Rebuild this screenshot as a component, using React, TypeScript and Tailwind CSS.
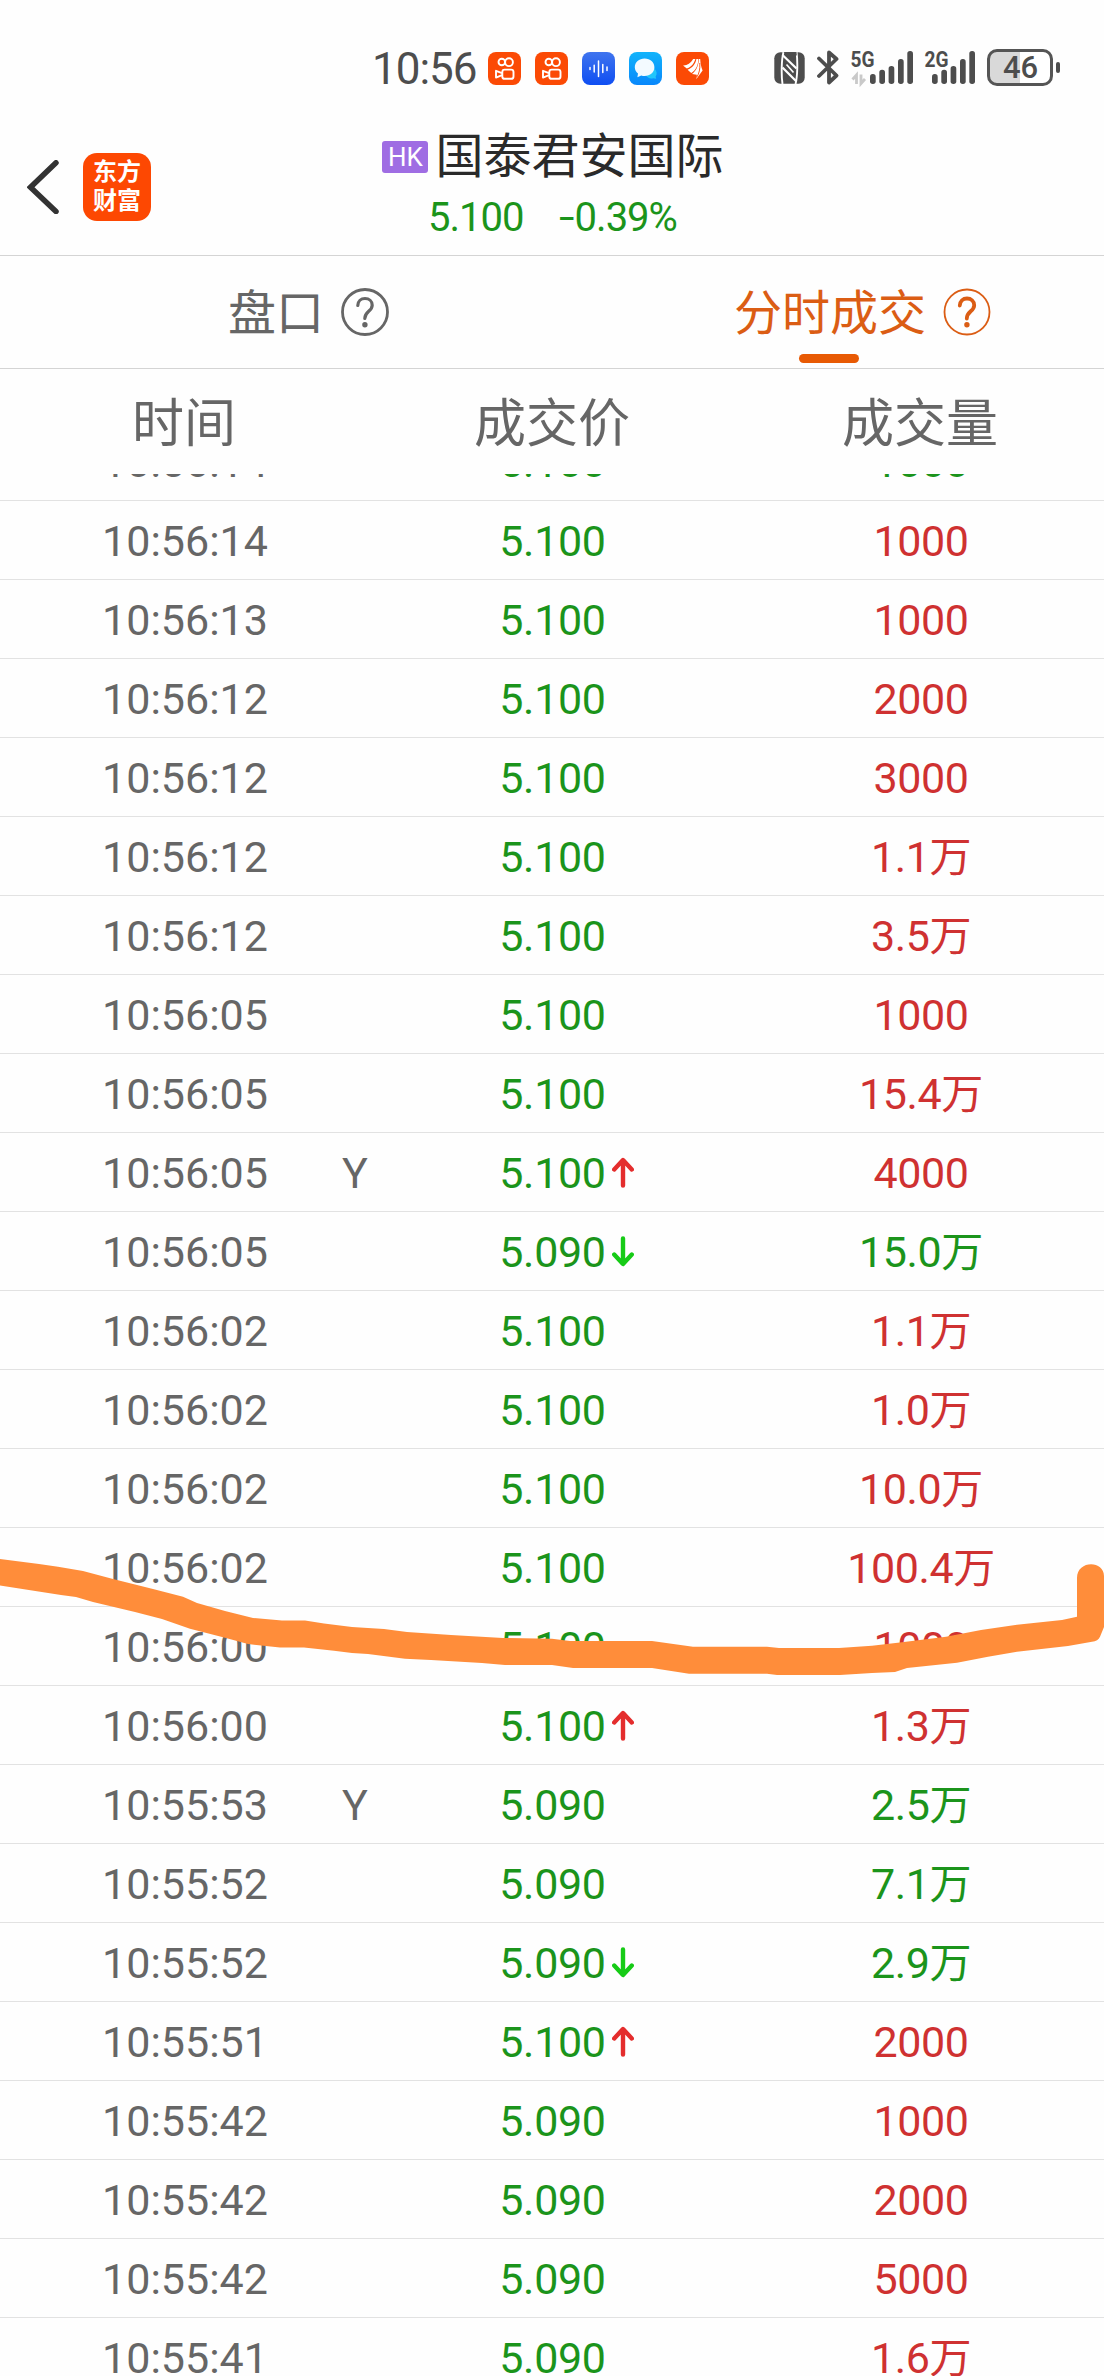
import React from "react";

type Tone = "red" | "green";
type Move = "up" | "down";

interface Trade {
  time: string;
  price: string;
  volume: string;
  tone: Tone;
  flag?: string;
  move?: Move;
}

const trades: Trade[] = [
  { time: "10:56:14", price: "5.100", volume: "1000", tone: "green" },
  { time: "10:56:14", price: "5.100", volume: "1000", tone: "red" },
  { time: "10:56:13", price: "5.100", volume: "1000", tone: "red" },
  { time: "10:56:12", price: "5.100", volume: "2000", tone: "red" },
  { time: "10:56:12", price: "5.100", volume: "3000", tone: "red" },
  { time: "10:56:12", price: "5.100", volume: "1.1万", tone: "red" },
  { time: "10:56:12", price: "5.100", volume: "3.5万", tone: "red" },
  { time: "10:56:05", price: "5.100", volume: "1000", tone: "red" },
  { time: "10:56:05", price: "5.100", volume: "15.4万", tone: "red" },
  { time: "10:56:05", price: "5.100", volume: "4000", tone: "red", flag: "Y", move: "up" },
  { time: "10:56:05", price: "5.090", volume: "15.0万", tone: "green", move: "down" },
  { time: "10:56:02", price: "5.100", volume: "1.1万", tone: "red" },
  { time: "10:56:02", price: "5.100", volume: "1.0万", tone: "red" },
  { time: "10:56:02", price: "5.100", volume: "10.0万", tone: "red" },
  { time: "10:56:02", price: "5.100", volume: "100.4万", tone: "red" },
  { time: "10:56:00", price: "5.100", volume: "1000", tone: "red" },
  { time: "10:56:00", price: "5.100", volume: "1.3万", tone: "red", move: "up" },
  { time: "10:55:53", price: "5.090", volume: "2.5万", tone: "green", flag: "Y" },
  { time: "10:55:52", price: "5.090", volume: "7.1万", tone: "green" },
  { time: "10:55:52", price: "5.090", volume: "2.9万", tone: "green", move: "down" },
  { time: "10:55:51", price: "5.100", volume: "2000", tone: "red", move: "up" },
  { time: "10:55:42", price: "5.090", volume: "1000", tone: "red" },
  { time: "10:55:42", price: "5.090", volume: "2000", tone: "red" },
  { time: "10:55:42", price: "5.090", volume: "5000", tone: "red" },
  { time: "10:55:41", price: "5.090", volume: "1.6万", tone: "red" },
];

function CameraAppIcon() {
  return (
    <svg viewBox="0 0 33 33" className="size-[33px]">
      <rect width="33" height="33" rx="8" fill="#fb4a05" />
      <g fill="none" stroke="#fff" strokeWidth="1.9">
        <circle cx="13.8" cy="10" r="3.3" />
        <circle cx="21" cy="10.2" r="3.9" />
        <rect x="14.3" y="17.6" width="11.2" height="9.2" rx="2.4" />
        <path d="M14 21.2 8 18.8v6.8l6-2.4" strokeLinejoin="round" />
      </g>
    </svg>
  );
}

function VoiceAppIcon() {
  return (
    <svg viewBox="0 0 33 33" className="size-[33px]">
      <defs>
        <linearGradient id="voice" x1="0" y1="0" x2="0" y2="1">
          <stop offset="0" stopColor="#3f74ee" />
          <stop offset="1" stopColor="#0f4ef2" />
        </linearGradient>
      </defs>
      <rect width="33" height="33" rx="8" fill="url(#voice)" />
      <path
        d="M8 15.6v2M12.2 13.2v6.8M16.5 9v15.4M20.8 12.6v8M25 15v3.6"
        stroke="#fff"
        strokeWidth="1.5"
        strokeLinecap="round"
      />
    </svg>
  );
}

function ChatAppIcon() {
  return (
    <svg viewBox="0 0 33 33" className="size-[33px]">
      <defs>
        <linearGradient id="chat" x1="0" y1="0" x2="0" y2="1">
          <stop offset="0" stopColor="#12b4fb" />
          <stop offset="1" stopColor="#0887fb" />
        </linearGradient>
      </defs>
      <rect width="33" height="33" rx="8" fill="url(#chat)" />
      <path d="M25 16c3 3 3.400 6 1.600 8.500l.6 2.300-3-.6c-3.500.8-6-.6-7-2.700z" fill="#22c6fb" />
      <path
        d="M15.600 6.600c5.600 0 9.800 3.700 9.800 8.700s-4.200 8.700-9.800 8.700c-1.200 0-2.300-.1-3.300-.5L8.400 25.300l.6-3.800c-2-1.600-3.200-3.700-3.200-6.200 0-5 4.200-8.700 9.800-8.700z"
        fill="#f3faff"
      />
    </svg>
  );
}

function FinanceAppIcon() {
  return (
    <svg viewBox="0 0 33 33" className="size-[33px]">
      <rect width="33" height="33" rx="8" fill="#fb4a05" />
      <g fill="#fff">
        <path d="M7 13.500c4.200.2 7.600-2 10.200-6.500h2.200c-1.600 5-4.600 8.400-8.600 9.600z" />
        <path d="M11.600 17.800c4.600-1.800 7.800-5.400 8.800-10.800h2c-.2 6.600-2.800 11.400-7.200 14z" />
        <path d="M16 22c4.200-3.200 6.400-8 7-15h1.200c.2 4.600 1 8.400 2.400 11.600l-6.400 8.600c.6-1.600.8-3 .6-4.400z" />
      </g>
      <path d="M23.800 11c.4 6-.6 10.500-3 14" fill="none" stroke="#fb4a05" strokeWidth="0.900" />
    </svg>
  );
}

function NfcIcon() {
  return (
    <svg viewBox="0 0 31 32" className="h-8 w-[31px]">
      <rect x="0.300" y="0.300" width="30.400" height="31.400" rx="6" fill="#4d4d4d" />
      <g fill="none" stroke="#fff">
        <path d="M9.500 0C7.300 8 7.300 24 8.500 32" strokeWidth="1.900" />
        <path d="M22.500 0C23.700 8 23.700 24 21.500 32" strokeWidth="1.900" />
        <path d="M8.500 3 22.500 16.500" strokeWidth="2.200" />
        <path d="M8.500 15.500 22.500 29.500" strokeWidth="2.200" />
        <path d="M12.500 12.500 19.500 20.500" strokeWidth="1.600" />
      </g>
      <path d="M9.500 0h13l.3 3-4.500 5z" fill="#4d4d4d" opacity="0.950" />
    </svg>
  );
}

function BluetoothIcon() {
  return (
    <svg viewBox="0 0 22 35" className="h-[35px] w-[22px]">
      <path
        d="M2 8.500 19.500 25.500 12 32.500V2.500L19.500 9 2 26"
        fill="none"
        stroke="#4d4d4d"
        strokeWidth="3.800"
        strokeLinecap="round"
        strokeLinejoin="round"
      />
    </svg>
  );
}

function Signal({ label, data }: { label: string; data?: boolean }) {
  const shift = data ? 19 : 7;
  const bars = [
    [0, 24],
    [9.3, 19.7],
    [18.6, 16],
    [28, 9],
    [37.3, 1],
  ];
  return (
    <svg viewBox="0 0 64 36" className="h-9 w-16 overflow-visible">
      <text
        x="-0.500"
        y="17.300"
        fontFamily="Roboto"
        fontSize="22.500"
        fontWeight="700"
        fill="#4d4d4d"
        textLength="24"
        lengthAdjust="spacingAndGlyphs"
      >
        {label}
      </text>
      {bars.map(([x, y]) => (
        <rect key={x} x={x + shift} y={y} width="5.700" height={34 - y} rx="2.700" fill="#4d4d4d" />
      ))}
      {data && (
        <path d="M5.500 34V25L1.500 29.500M10 24.500v9l4-4.500" fill="none" stroke="#c9c9c9" strokeWidth="2.800" />
      )}
    </svg>
  );
}

function Battery() {
  return (
    <div className="flex items-center">
      <div className="flex h-[37px] w-[66px] overflow-hidden rounded-[10px] border-[3px] border-[#555] bg-[linear-gradient(90deg,#d9d9d9_50%,#fff_50%)]">
        <span className="flex w-full items-center justify-center pl-[1px] text-[31px] leading-none font-medium text-[#4d4d4d]">
          46
        </span>
      </div>
      <span className="ml-[3px] h-[11px] w-1 rounded-full bg-[#4d4d4d]" />
    </div>
  );
}

function StatusBar() {
  return (
    <div className="flex h-[120px] shrink-0 items-start pt-[50px] pl-[372px]">
      <span className="w-[116px] pt-px text-[44px] leading-[37px] tracking-[-1px] text-[#4d4d4d]">10:56</span>
      <div className="flex gap-[14px] pt-[2px]">
        <CameraAppIcon />
        <CameraAppIcon />
        <VoiceAppIcon />
        <ChatAppIcon />
        <FinanceAppIcon />
      </div>
      <div className="ml-[65px] flex w-[43px] pt-[2px]">
        <NfcIcon />
      </div>
      <div className="w-[34px]">
        <BluetoothIcon />
      </div>
      <div className="w-[74px]">
        <Signal label="5G" data />
      </div>
      <div className="w-[62px]">
        <Signal label="2G" />
      </div>
      <div className="-mt-px">
        <Battery />
      </div>
    </div>
  );
}

function Header() {
  return (
    <header className="relative flex h-[136px] shrink-0 justify-center border-b border-[#d4d4d4]">
      <div className="absolute top-[33px] left-[27px] flex items-center">
        <svg viewBox="0 0 32 54" className="h-[54px] w-8">
          <path
            d="M29 2.800 3.500 27.300 29 51.500"
            fill="none"
            stroke="#333"
            strokeWidth="5.500"
            strokeLinecap="round"
            strokeLinejoin="miter"
          />
        </svg>
        <div className="ml-6 flex size-[68px] flex-col items-center justify-center rounded-[14px] bg-[#fd4802] text-[24px] leading-[29px] font-bold text-white">
          <span>东方</span>
          <span>财富</span>
        </div>
      </div>
      <div className="flex flex-col items-center">
        <div className="mt-[9px] flex h-14 items-center pl-[2px]">
          <span className="mr-[7px] flex h-8 w-[46px] items-center justify-center rounded-[3px] bg-[#9f6de3] text-[26px] leading-none text-white">
            HK
          </span>
          <h1 className="text-[48px] leading-[56px] text-[#2a2a2a]">国泰君安国际</h1>
        </div>
        <div className="mt-[12px] flex gap-[35px] pl-px text-[40px] leading-[42px] text-[#1b941b]">
          <span className="tracking-[-1px]">5.100</span>
          <span className="tracking-[-1px]">
            <span className="mr-[4px] ml-[2px] inline-block scale-x-[1.4]">-</span>0.39%
          </span>
        </div>
      </div>
    </header>
  );
}

function HelpIcon({ className, ring, mark }: { className: string; ring: number; mark: number }) {
  return (
    <svg viewBox="0 0 48 48" className={className} fill="none" stroke="currentColor" strokeLinecap="round">
      <circle cx="24" cy="24" r="22.500" strokeWidth={ring} />
      <path d="M16.800 17.500C17 13 20 10.500 24 10.500s7.200 2.700 7.200 6.700c0 6.300-7.400 6-7.400 13.300" strokeWidth={mark} />
      <circle cx="23.900" cy="36.800" r="2.700" fill="currentColor" stroke="none" />
    </svg>
  );
}

function Tabs() {
  return (
    <nav className="grid h-[113px] shrink-0 grid-cols-2 border-b border-[#d4d4d4]">
      <div className="flex items-start gap-[17px] pt-7 pl-[228px] text-[#666]">
        <span className="pt-[2px] text-[48px] leading-[56px]">盘口</span>
        <HelpIcon className="mt-1 size-12" ring={2.8} mark={3.2} />
      </div>
      <div className="flex items-start gap-[17px] pt-7 pl-[182px] text-[#db5d14]">
        <span className="relative pt-[2px] text-[48px] leading-[56px]">
          分时成交
          <span className="absolute top-[70px] left-[65px] h-[9px] w-[60px] rounded-full bg-[#e85a04]" />
        </span>
        <HelpIcon className="mt-1 size-12" ring={1.8} mark={3.8} />
      </div>
    </nav>
  );
}

function MoveArrow({ move }: { move: Move }) {
  return (
    <svg
      viewBox="0 0 22 31"
      className={
        move === "up"
          ? "absolute top-[23px] left-[244px] h-[31px] w-[22px] text-[#e42d2d]"
          : "absolute top-[23px] left-[244px] h-[31px] w-[22px] rotate-180 text-[#16cb16]"
      }
      fill="none"
      stroke="currentColor"
      strokeWidth="4.400"
      strokeLinecap="round"
      strokeLinejoin="round"
    >
      <path d="M11 28.500V3.500M2.200 12.500 11 3l8.800 9.500" />
    </svg>
  );
}

function TradeRow({ trade }: { trade: Trade }) {
  return (
    <div className="grid h-[79px] shrink-0 grid-cols-3 border-b border-[#e2e2e2] pt-px text-center text-[43px] leading-[78px]">
      <div className="relative text-[#666]">
        <span className="pl-[2px]">{trade.time}</span>
        {trade.flag && <span className="absolute top-0 left-[342px]">{trade.flag}</span>}
      </div>
      <div className="relative tracking-[-0.3px] text-[#1b941b]">
        <span className="pl-px">{trade.price}</span>
        {trade.move && <MoveArrow move={trade.move} />}
      </div>
      <div
        className={
          trade.tone === "red"
            ? "pl-[2px] tracking-[-0.4px] text-[#cf3131]"
            : "pl-[2px] tracking-[-0.4px] text-[#1b941b]"
        }
      >
        {trade.volume.replace("万", "")}
        {trade.volume.endsWith("万") && <span className="text-[42px]">万</span>}
      </div>
    </div>
  );
}

function MarkerStroke() {
  return (
    <svg
      viewBox="0 1550 1104 140"
      className="pointer-events-none absolute top-[1550px] left-0 h-[140px] w-[1104px]"
    >
      <path
        fill="#ff8d3a"
        d="M0 1559 39 1564 58 1566.700 83 1571 113 1579 153 1589 183 1596.700 197 1603 225 1611 253 1618 282 1620.500 305 1620.500 324 1623.500 352 1627 384 1629 407 1632 451 1635 503 1638 552 1638.700 570 1641 652 1641 693 1646.700 767 1646.700 779 1648 839 1648 872 1645.700 904 1642 946 1636.700 981 1630 1017 1624.700 1062 1620 1077 1616.700V1578C1077 1560 1104 1560 1104 1576V1627L1100 1636.700Q1098 1641 1092 1641.700L1068 1646 1017 1651.700 988 1656.700 957 1662.700 907 1668 895 1672 872 1673 840 1675 777 1675 767 1673.700 689 1673.700 652 1668 573 1668 552 1665 505 1665 482 1663 431 1660 405 1658.700 368 1654 352 1653 334 1650.700 304 1647.500 280 1647.500 248 1644 225 1637.700 190 1628.700 162 1619 135 1612 93 1602 76 1597 61 1595 0 1585.500Z"
      />
    </svg>
  );
}

export default function App() {
  return (
    <main className="relative flex h-[2376px] w-[1104px] flex-col overflow-hidden bg-[#fefefe] font-[Roboto,'Noto_Sans_CJK_SC',sans-serif]">
      <StatusBar />
      <Header />
      <Tabs />
      <div className="grid h-[105px] shrink-0 grid-cols-3 pt-[26px] text-center text-[52px] leading-[60px] text-[#666]">
        <span>时间</span>
        <span>成交价</span>
        <span>成交量</span>
      </div>
      <div className="flex flex-1 flex-col overflow-hidden">
        <div className="-mt-[52px] flex flex-col">
          {trades.map((trade, i) => (
            <TradeRow key={i} trade={trade} />
          ))}
        </div>
      </div>
      <MarkerStroke />
    </main>
  );
}
